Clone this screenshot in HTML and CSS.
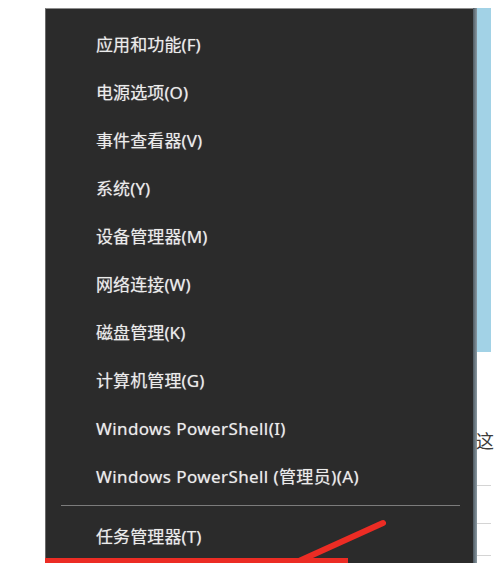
FILE: index.html
```html
<!DOCTYPE html>
<html lang="zh-CN">
<head>
    <meta charset="UTF-8">
    <meta name="viewport" content="width=device-width, initial-scale=1.0">
    <title>Win+X 菜单</title>
    <link rel="stylesheet" href="styles.css">
</head>
<body>
    <div class="desktop">
        <div class="menu">
            <div class="item">应用和功能(F)</div>
            <div class="item">电源选项(O)</div>
            <div class="item">事件查看器(V)</div>
            <div class="item">系统(Y)</div>
            <div class="item">设备管理器(M)</div>
            <div class="item">网络连接(W)</div>
            <div class="item">磁盘管理(K)</div>
            <div class="item">计算机管理(G)</div>
            <div class="item latin">Windows PowerShell(I)</div>
            <div class="item latin">Windows PowerShell (管理员)(A)</div>
            <div class="separator"></div>
            <div class="item">任务管理器(T)</div>
        </div>
        <div class="shadow"></div>
        <div class="window">
            <div class="titlebar"></div>
            <div class="page">
                <span class="word">这</span>
                <div class="rule rule-1"></div>
                <div class="rule rule-2"></div>
                <div class="rule rule-3"></div>
            </div>
        </div>
    </div>

    <!-- red marker drawn over the screenshot -->
    <svg class="marker" width="500" height="563" viewBox="0 0 500 563">
        <rect x="45" y="558" width="303" height="8" fill="#ec2c24"/>
        <line x1="383" y1="523" x2="288" y2="566" stroke="#ec2c24" stroke-width="6" stroke-linecap="round"/>
    </svg>
</body>
</html>
```

FILE: styles.css
```css
body {
    margin: 0;
    background: #fff;
    font-family: 'Noto Sans', 'Noto Sans CJK SC', sans-serif;
    overflow: hidden;
}
.desktop {
    position: relative;
    display: flex;
    height: 563px;
    padding: 8px 0 0 45px;
    box-sizing: border-box;
}
.menu {
    width: 428px;
    height: 570px;
    background: #2b2b2b;
    border-top: 1px solid #8d8d8d;
    border-left: 1px solid #6a6a6a;
    padding-top: 12px;
    box-sizing: border-box;
    flex-shrink: 0;
}
.item {
    height: 48px;
    line-height: 48px;
    padding-left: 50px;
    color: #ececec;
    font-size: 17px;
    letter-spacing: 0.1px;
    white-space: nowrap;
    text-shadow: 0 0 1px rgba(255, 255, 255, 0.5);
}
.latin {
    letter-spacing: 0.4px;
}
.separator {
    height: 1px;
    margin: 4px 13px 7px 15px;
    background: #7c7c7c;
}
.shadow {
    width: 4px;
    background: linear-gradient(to right, #4f5a62, #8b9aa3);
    flex-shrink: 0;
}
.window {
    width: 14px;
    flex-shrink: 0;
    display: flex;
    flex-direction: column;
}
.titlebar {
    height: 344px;
    background: #a2d2e6;
}
.page {
    position: relative;
    flex: 1;
    background: #fff;
}
.word {
    position: absolute;
    left: -1px;
    top: 78px;
    font-size: 18px;
    line-height: 20px;
    color: #3c3c3c;
    font-family: 'Noto Sans CJK SC', sans-serif;
}
.rule {
    position: absolute;
    left: 0;
    right: 0;
    height: 1px;
    background: #d4d4d4;
}
.rule-1 { top: 133px; }
.rule-2 { top: 171px; }
.rule-3 { top: 203px; }
.marker {
    position: absolute;
    left: 0;
    top: 0;
}
```
